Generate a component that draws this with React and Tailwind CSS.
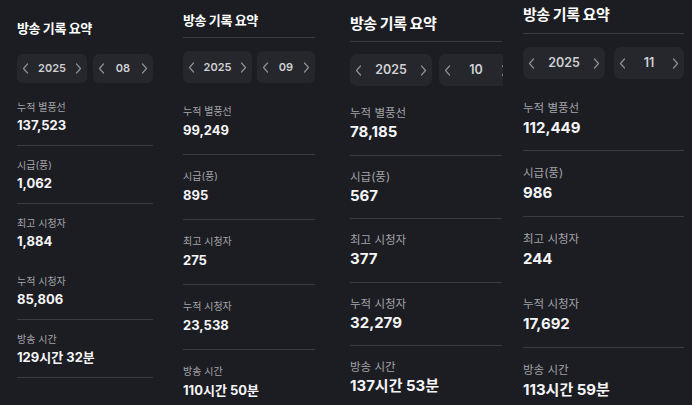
import React from "react";

const LABELS = ["누적 별풍선", "시급(풍)", "최고 시청자", "누적 시청자", "방송 시간"];

const PANELS = [
  {
    wrap: "w-[166px] pl-[17px] pt-[18px]",
    inner: "w-[136px]",
    title: "text-[13px] leading-[20px] tracking-[-0.03em]",
    line: null,
    stepRow: "mt-[16px] gap-[6px]",
    stepH: "h-[29px] rounded-[6px]",
    s1: "w-[70px]",
    s2: "w-[60px]",
    stepText: "text-[11px]",
    secWrap: "mt-[5px]",
    secH: "h-[58px] pt-[12px]",
    label: "text-[10px] leading-[15px]",
    value: "text-[13px] leading-[20px]",
    lines: [true, true, false, true, true],
    month: "08",
    values: ["137,523", "1,062", "1,884", "85,806", "129시간 32분"],
  },
  {
    wrap: "w-[167px] pl-[17px] pt-[10px]",
    inner: "w-[132px]",
    title: "text-[13px] leading-[20px] tracking-[-0.03em]",
    line: "mt-[7px]",
    stepRow: "mt-[13px] gap-[5px]",
    stepH: "h-[32px] rounded-[6px]",
    s1: "w-[69px]",
    s2: "w-[58px]",
    stepText: "text-[11px]",
    secWrap: "mt-[7px]",
    secH: "h-[65px] pt-[13px]",
    label: "text-[10px] leading-[16px]",
    value: "text-[13px] leading-[22px]",
    lines: [true, true, true, true, false],
    month: "09",
    values: ["99,249", "895", "275", "23,538", "110시간 50분"],
  },
  {
    wrap: "w-[170px] pl-[17px] pt-[12px]",
    inner: "w-[152px]",
    title: "text-[15px] leading-[24px] tracking-[-0.03em]",
    line: "mt-[5px]",
    stepRow: "mt-[12px] gap-[7px]",
    stepH: "h-[32px] rounded-[7px]",
    s1: "w-[82px]",
    s2: "w-[74px]",
    stepText: "text-[12.5px]",
    secWrap: "mt-[6px]",
    secH: "h-[63.5px] pt-[13px]",
    label: "text-[11.5px] leading-[16px]",
    value: "text-[15px] leading-[22px]",
    lines: [true, true, true, true, false],
    month: "10",
    values: ["78,185", "567", "377", "32,279", "137시간 53분"],
  },
  {
    wrap: "w-[189px] pl-[20px] pt-[3px]",
    inner: "w-[161px]",
    title: "text-[15px] leading-[24px] tracking-[-0.03em]",
    line: "mt-[6px]",
    stepRow: "mt-[13px] gap-[9px]",
    stepH: "h-[32px] rounded-[7px]",
    s1: "w-[82px]",
    s2: "w-[70px]",
    stepText: "text-[12.5px]",
    secWrap: "mt-[6.5px]",
    secH: "h-[65.5px] pt-[14px]",
    label: "text-[11.5px] leading-[16px]",
    value: "text-[15px] leading-[24px]",
    lines: [true, true, false, true, false],
    month: "11",
    values: ["112,449", "986", "244", "17,692", "113시간 59분"],
  },
];

function Chevron({ dir }) {
  return (
    <svg width="7" height="11" viewBox="0 0 7 11" className="shrink-0">
      <polyline
        points={dir === "left" ? "5.5,1 1.5,5.5 5.5,10" : "1.5,1 5.5,5.5 1.5,10"}
        fill="none"
        stroke="#8e8f95"
        strokeWidth="1.2"
        strokeLinecap="round"
        strokeLinejoin="round"
      />
    </svg>
  );
}

function Stepper({ cls, h, text, textCls }) {
  return (
    <div className={`${cls} ${h} shrink-0 bg-[#26272c] flex items-center justify-between px-[5px]`}>
      <Chevron dir="left" />
      <span className={`${textCls} font-semibold text-[#cfd0d4]`}>{text}</span>
      <Chevron dir="right" />
    </div>
  );
}

function Panel({ p }) {
  return (
    <div className={`${p.wrap} h-full shrink-0 overflow-hidden`}>
      <div className={p.inner}>
        <div className={`${p.title} font-bold text-white`}>방송 기록 요약</div>
        {p.line && <div className={`${p.line} h-px bg-[#3a3b40]`} />}
        <div className={`${p.stepRow} flex`}>
          <Stepper cls={p.s1} h={p.stepH} text="2025" textCls={p.stepText} />
          <Stepper cls={p.s2} h={p.stepH} text={p.month} textCls={p.stepText} />
        </div>
        <div className={p.secWrap}>
          {LABELS.map((l, i) => (
            <div
              key={l}
              className={`${p.secH} border-b ${p.lines[i] ? "border-[#3a3b40]" : "border-transparent"}`}
            >
              <div className={`${p.label} text-[#a2a3a8]`}>{l}</div>
              <div className={`${p.value} font-bold text-[#f5f5f7]`}>{p.values[i]}</div>
            </div>
          ))}
        </div>
      </div>
    </div>
  );
}

export default function App() {
  return (
    <div className="w-[692px] h-[405px] overflow-hidden flex bg-[#1c1d22] font-['Inter','Noto_Sans_CJK_KR',sans-serif]">
      {PANELS.map((p, i) => (
        <Panel key={i} p={p} />
      ))}
    </div>
  );
}
